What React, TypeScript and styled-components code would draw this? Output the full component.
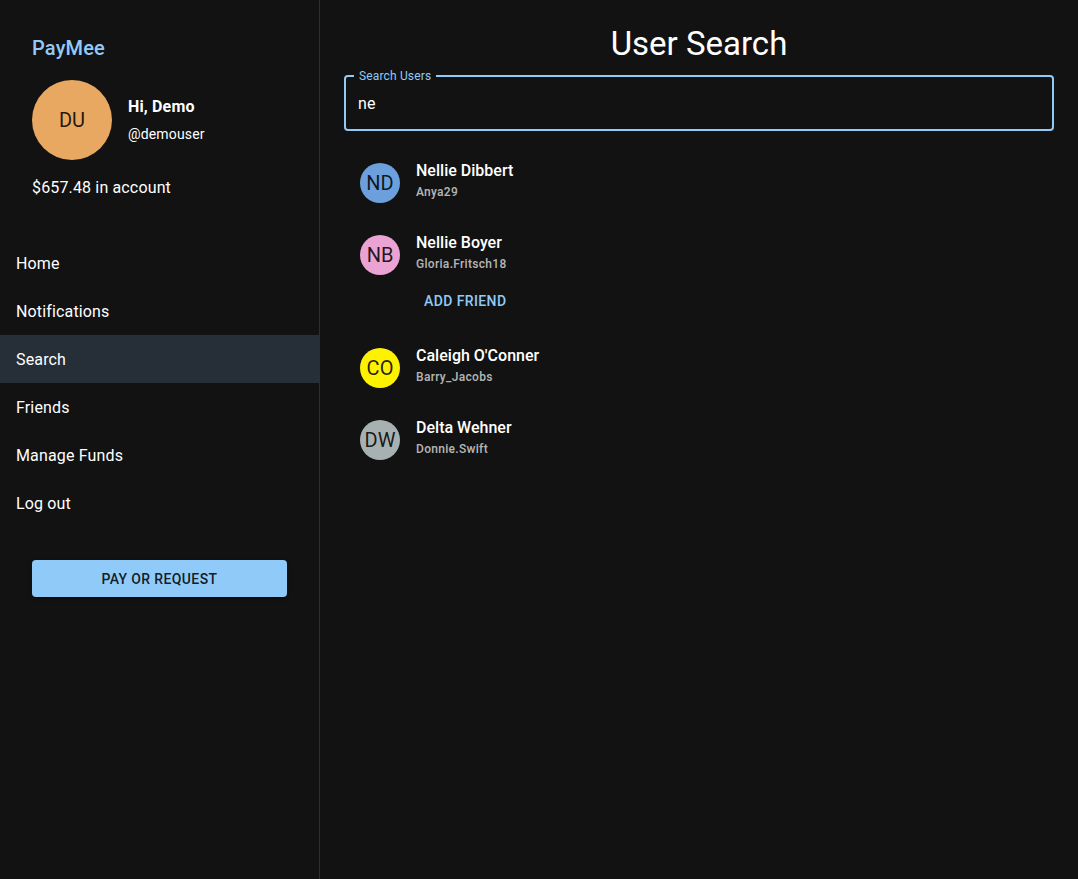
import React, { useState } from "react";
import styled, { createGlobalStyle } from "styled-components";

const GlobalStyle = createGlobalStyle`
  html, body {
    margin: 0;
    padding: 0;
    background: #121212;
  }
  body {
    font-family: Roboto, "Liberation Sans", Arial, sans-serif;
    letter-spacing: 0.15px;
    color: #fff;
  }
`;

const medium = `"Roboto Medium", Roboto, "Liberation Sans", Arial, sans-serif`;

const Layout = styled.div`
  display: grid;
  grid-template-columns: 320px 1fr;
  min-height: 879px;
  background: #121212;
`;

const Sidebar = styled.aside`
  border-right: 1px solid rgba(255, 255, 255, 0.12);
  display: flex;
  flex-direction: column;
`;

const Profile = styled.div`
  padding: 36px 32px 0;
`;

const Brand = styled.div`
  font-family: ${medium};
  font-size: 20px;
  font-weight: 500;
  color: #90caf9;
  line-height: 24px;
`;

const ProfileRow = styled.div`
  display: flex;
  align-items: center;
  gap: 16px;
  margin-top: 20px;
`;

const ProfileText = styled.div`
  padding-bottom: 2px;
`;

const Avatar = styled.div<{ $bg: string; $size: number }>`
  width: ${(p) => p.$size}px;
  height: ${(p) => p.$size}px;
  border-radius: 50%;
  background: ${(p) => p.$bg};
  color: rgba(0, 0, 0, 0.87);
  font-size: 20px;
  letter-spacing: 0;
  display: flex;
  align-items: center;
  justify-content: center;
  flex-shrink: 0;
`;

const Greeting = styled.div`
  font-size: 16px;
  font-weight: 700;
  line-height: 24px;
`;

const Handle = styled.div`
  font-size: 14px;
  line-height: 20px;
  margin-top: 5px;
`;

const Balance = styled.div`
  font-size: 16px;
  line-height: 24px;
  margin-top: 16px;
`;

const Nav = styled.nav`
  margin-top: 39px;
  display: flex;
  flex-direction: column;
`;

const NavItem = styled.div<{ $active?: boolean }>`
  height: 48px;
  display: flex;
  align-items: center;
  padding: 0 16px;
  font-size: 16px;
  background: ${(p) => (p.$active ? "rgba(144, 202, 249, 0.16)" : "transparent")};
`;

const PayButton = styled.button`
  margin: 33px 32px 0;
  height: 37px;
  border: none;
  border-radius: 4px;
  background: #90caf9;
  color: rgba(0, 0, 0, 0.87);
  font-family: ${medium};
  font-size: 14px;
  font-weight: 500;
  letter-spacing: 0.4px;
  text-transform: uppercase;
  box-shadow: 0 3px 1px -2px rgba(0,0,0,0.2), 0 2px 2px 0 rgba(0,0,0,0.14), 0 1px 5px 0 rgba(0,0,0,0.12);
`;

const Main = styled.main`
  padding: 0 24px;
  display: flex;
  flex-direction: column;
`;

const Title = styled.h1`
  margin: 24px 0 0;
  font-size: 33px;
  font-weight: 400;
  line-height: 40px;
  letter-spacing: 0;
  text-align: center;
`;

const Field = styled.div`
  margin-top: 11px;
  position: relative;
  height: 56px;
  box-sizing: border-box;
  border: 2px solid #90caf9;
  border-radius: 4px;
  padding: 0 12px;
  display: flex;
  align-items: center;
`;

const FieldLabel = styled.label`
  position: absolute;
  top: -7px;
  left: 8px;
  padding: 0 5px;
  background: #121212;
  font-size: 12px;
  line-height: 12px;
  color: #90caf9;
`;

const SearchInput = styled.input`
  background: transparent;
  border: none;
  outline: none;
  color: #fff;
  font-family: Roboto, "Liberation Sans", Arial, sans-serif;
  font-size: 16px;
  letter-spacing: 0.15px;
  width: 100%;
  padding: 0;
  caret-color: #fff;
`;

const List = styled.ul`
  list-style: none;
  margin: 16px 0 0;
  padding: 0;
`;

const Item = styled.li<{ $open?: boolean }>`
  display: flex;
  align-items: center;
  gap: 16px;
  padding: 8px 16px ${(p) => (p.$open ? "0" : "8px")};
  height: ${(p) => (p.$open ? "64px" : "72px")};
  box-sizing: border-box;
`;

const ItemText = styled.div`
  display: flex;
  flex-direction: column;
  padding-bottom: 5px;
`;

const Name = styled.div`
  font-family: ${medium};
  font-size: 16px;
  font-weight: 500;
  line-height: 24px;
  letter-spacing: 0;
`;

const Username = styled.div`
  font-family: ${medium};
  font-size: 12px;
  font-weight: 500;
  line-height: 19px;
  letter-spacing: 0.3px;
  color: rgba(255, 255, 255, 0.7);
`;

const ActionRow = styled.div`
  padding: 0 0 13px 72px;
`;

const TextButton = styled.button`
  height: 36px;
  padding: 0 8px;
  background: transparent;
  border: none;
  color: #90caf9;
  font-family: ${medium};
  font-size: 14px;
  font-weight: 500;
  letter-spacing: 0.4px;
  text-transform: uppercase;
`;

const users = [
  { initials: "ND", name: "Nellie Dibbert", username: "Anya29", color: "#6ba0dc" },
  { initials: "NB", name: "Nellie Boyer", username: "Gloria.Fritsch18", color: "#eaa3d3" },
  { initials: "CO", name: "Caleigh O'Conner", username: "Barry_Jacobs", color: "#fff200" },
  { initials: "DW", name: "Delta Wehner", username: "Donnie.Swift", color: "#a8b1b1" },
];

const navItems = ["Home", "Notifications", "Search", "Friends", "Manage Funds", "Log out"];

export default function App() {
  const [query, setQuery] = useState("ne");
  const open = "NB";

  return (
    <>
      <GlobalStyle />
      <Layout>
        <Sidebar>
          <Profile>
            <Brand>PayMee</Brand>
            <ProfileRow>
              <Avatar $bg="#e8a862" $size={80}>DU</Avatar>
              <ProfileText>
                <Greeting>Hi, Demo</Greeting>
                <Handle>@demouser</Handle>
              </ProfileText>
            </ProfileRow>
            <Balance>$657.48 in account</Balance>
          </Profile>
          <Nav>
            {navItems.map((n) => (
              <NavItem key={n} $active={n === "Search"}>
                {n}
              </NavItem>
            ))}
          </Nav>
          <PayButton>Pay or Request</PayButton>
        </Sidebar>
        <Main>
          <Title>User Search</Title>
          <Field>
            <FieldLabel htmlFor="user-search">Search Users</FieldLabel>
            <SearchInput
              id="user-search"
              autoFocus
              value={query}
              onChange={(e) => setQuery(e.target.value)}
            />
          </Field>
          <List>
            {users.map((u) => (
              <React.Fragment key={u.initials}>
                <Item $open={u.initials === open}>
                  <Avatar $bg={u.color} $size={40}>{u.initials}</Avatar>
                  <ItemText>
                    <Name>{u.name}</Name>
                    <Username>{u.username}</Username>
                  </ItemText>
                </Item>
                {u.initials === open && (
                  <ActionRow>
                    <TextButton>Add Friend</TextButton>
                  </ActionRow>
                )}
              </React.Fragment>
            ))}
          </List>
        </Main>
      </Layout>
    </>
  );
}
